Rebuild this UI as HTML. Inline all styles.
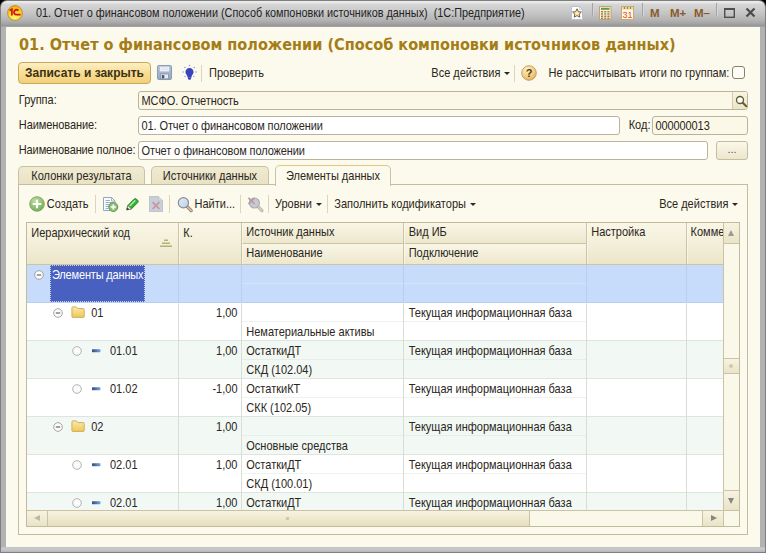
<!DOCTYPE html>
<html lang="ru">
<head>
<meta charset="utf-8">
<title>01. Отчет о финансовом положении</title>
<style>
*{box-sizing:border-box;margin:0;padding:0}
html,body{width:766px;height:553px;overflow:hidden;background:#000}
body{font-family:"Liberation Sans",sans-serif;font-size:11px;color:#2a2620;position:relative}
#win{position:absolute;left:0;top:0;width:766px;height:553px;background:#7e7e7e;border-radius:7px 7px 0 0;overflow:hidden}
#frame{position:absolute;left:1px;top:1px;width:764px;height:551px;border-radius:6px 6px 0 0;
 background:linear-gradient(to bottom,#eeeeee 0px,#e6e6e6 2px,#d6d6d6 3px,#cecece 8px,#c3c3c4 13px,#b4b4b5 19px,#a2a2a3 23px,#949495 25px,#b2b2b3 26px,#b2b2b3 100%)}
#titletext{position:absolute;left:36px;top:7px;font-size:11px;line-height:13px;white-space:nowrap;color:#222;transform-origin:0 80%;transform:scale(0.986,1.08)}
.tsep{position:absolute;top:3px;width:1px;height:13px;background:#a4a4a6;box-shadow:1px 0 0 #d6d6d8}
.mm{position:absolute;top:7px;font-weight:bold;font-size:11.5px;line-height:13px;color:#8a5a2a;white-space:nowrap}
#content{position:absolute;left:6px;top:27px;width:754px;height:520px;background:#fcfaec;overflow:hidden}
.t{position:absolute;white-space:nowrap;line-height:13px;height:13px;transform:scaleY(1.1);transform-origin:0 10.3px}
.s{display:inline-block;transform:scaleY(1.1);transform-origin:0 72%}
#h1{transform:none;font-family:"DejaVu Sans Condensed","DejaVu Sans","Liberation Sans",sans-serif;font-weight:bold;font-size:16.1px;line-height:20px;height:20px;color:#a57d16}
.ic{position:absolute;overflow:visible}
.sep{position:absolute;width:1px;background:#dbd5bc}
.dd{position:absolute;width:0;height:0;border-left:3px solid transparent;border-right:3px solid transparent;border-top:3px solid #2a2a2a}
#btnsave{position:absolute;width:133px;height:22px;border:1px solid #c9a95c;border-radius:4px;
 background:linear-gradient(to bottom,#fcefc4 0%,#f7dc8f 55%,#f2d07a 100%);text-align:center;white-space:nowrap}
#btnsave span{font-weight:bold;font-size:12px;line-height:20px;color:#3c3014}
.chk{position:absolute;width:13px;height:13px;border:1px solid #8a8268;border-radius:3px;background:#fdfcf6}
.inp{position:absolute;height:19px;border:1px solid #b9b39a;border-radius:3px;background:#fff;line-height:17px;padding-left:2.5px;white-space:nowrap;overflow:hidden}
.inp .s{position:relative;top:0.8px;letter-spacing:-0.1px}
.ro{background:#fbf8e8}
.lupa{position:absolute;right:0;top:0;width:15px;height:17px;border-left:1px solid #d2cbae;background:linear-gradient(to bottom,#f8f4de,#ebe5c8)}
.lupa svg{position:absolute;left:1.5px;top:2.5px}
.dots{position:absolute;width:32px;height:19px;border:1px solid #c4bd9e;border-radius:3px;background:linear-gradient(to bottom,#fbf8e8,#ece6cd);text-align:center;line-height:15px;color:#555}
.tab{position:absolute;top:139px;height:19px;border:1px solid #c9c2a4;border-bottom:none;border-radius:5px 5px 0 0;
 background:linear-gradient(to bottom,#f0ead2,#e8e1c4);line-height:19px;text-align:center;white-space:nowrap}
.tab.act{top:138px;height:21px;background:#fcfaec;line-height:20px;border-top-color:#dcc680}
#panel{position:absolute;left:12px;top:157px;width:730px;height:351px;border:1px solid #c3bda0;background:#fcfaec}
#tbl{position:absolute;border:1px solid #c2bb9b;background:#fff;overflow:hidden}
#tbl>*{position:absolute}
.hd{background:linear-gradient(to bottom,#f9f6e6 0%,#f3efda 50%,#ebe5c9 100%)}
.hd2{background:linear-gradient(to bottom,#f9f6e6 0%,#ede7cd 100%)}
.hl{height:1px;background:#cbc4a6}
.hv{width:1px;background:#cbc4a6;box-shadow:1px 0 0 rgba(255,255,255,.45)}
.row{left:0;width:696px;height:37px}
.rl{left:0;width:696px;height:1px}
.sl{height:1px}
.gv{width:1px;background:#d9ddd6}
.cur{background:#4860c0;outline:1px dotted #c8d0f0;outline-offset:-1px}
.vsb{background:#faf8e9;border-left:1px solid #c9c2a4}
.hsb{background:#faf8e9;border-top:1px solid #c9c2a4}
.sbtn{background:linear-gradient(to bottom,#f7f3df,#e9e3c7)}
.sbl{height:1px;background:#c9c2a4}
.thumb{background:linear-gradient(to bottom,#f7f3df,#e6dfbf);border-left:1px solid #c9c2a4;border-right:1px solid #c9c2a4}
.corner{background:#faf8e9;border-left:1px solid #c9c2a4}
.sbtn i,.thumb i{position:absolute;display:block}
.au{left:4px;top:7px;border-left:3.5px solid transparent;border-right:3.5px solid transparent;border-bottom:6px solid #9a9a94}
.ad{left:4px;top:7px;border-left:3.5px solid transparent;border-right:3.5px solid transparent;border-top:6px solid #86867e}
.al{left:7px;top:4px;border-top:3.5px solid transparent;border-bottom:3.5px solid transparent;border-right:6px solid #bcb8a8}
.ar{left:8px;top:4px;border-top:3.5px solid transparent;border-bottom:3.5px solid transparent;border-left:6px solid #86867e}
.dot{left:5px;top:5px;width:4px;height:4px;border-radius:2px;background:#cfc9b0}
.grip{left:238px;top:6px;width:3px;height:3px;background:#cfc9b0}

#fbot{position:absolute;left:1px;top:547px;width:764px;height:5px;background:linear-gradient(to bottom,#c2c2c6,#cacace 40%,#b6b6ba)}

</style>
</head>
<body>
<div id="win">
<div id="frame"></div><div id="fbot"></div>
<svg class="ic" style="left:7px;top:5px" width="16" height="16" viewBox="0 0 16 16"><defs><radialGradient id="lg" cx="50%" cy="80%" r="75%"><stop offset="0" stop-color="#fff878"/><stop offset="0.6" stop-color="#fbd81e"/><stop offset="1" stop-color="#f0b400"/></radialGradient></defs>
<circle cx="8" cy="8" r="7.4" fill="url(#lg)" stroke="#b88a3a" stroke-width="0.9"/>
<path d="M2.6 5.6 L4.9 4.3 V10.4" fill="none" stroke="#d41414" stroke-width="1.7"/>
<path d="M11.4 5.6 A2.5 2.5 0 1 0 9 9.7 H13.6" fill="none" stroke="#d41414" stroke-width="1.8"/></svg>
<div id="titletext">01. Отчет о финансовом положении (Способ компоновки источников данных)&nbsp; (1С:Предприятие)</div>
<svg class="ic" style="left:571px;top:6px" width="12" height="14" viewBox="0 0 12 14"><path d="M0.5 0.5 H8.5 L11.5 3.5 V13.5 H0.5 Z" fill="#fdfdff" stroke="#b4c0d6"/><path d="M8.5 0.5 V3.5 H11.5" fill="none" stroke="#b4c0d6" stroke-width="0.7"/>
<path d="M6 2.8 L7.3 5.7 L10.4 6 L8.1 8.1 L8.8 11.2 L6 9.6 L3.2 11.2 L3.9 8.1 L1.6 6 L4.7 5.7 Z" fill="#f8eabc" stroke="#7e6030" stroke-width="1" stroke-linejoin="round"/></svg>
<div class="tsep" style="left:592px"></div>
<svg class="ic" style="left:598.5px;top:5.7px" width="12.5" height="14" viewBox="0 0 12.5 14"><rect x="0.5" y="0.5" width="11.5" height="13" fill="#faf1d2" stroke="#c2a472"/>
<rect x="2" y="1.8" width="8.5" height="2" fill="#5c9a48"/>
<g fill="#8a6a3a"><rect x="2" y="5.2" width="2.1" height="1.2"/><rect x="5.2" y="5.2" width="2.1" height="1.2"/><rect x="8.4" y="5.2" width="2.1" height="1.2"/>
<rect x="2" y="7.4" width="2.1" height="1.2"/><rect x="5.2" y="7.4" width="2.1" height="1.2"/><rect x="8.4" y="7.4" width="2.1" height="1.2"/>
<rect x="2" y="9.6" width="2.1" height="1.2"/><rect x="5.2" y="9.6" width="2.1" height="1.2"/><rect x="8.4" y="9.6" width="2.1" height="1.2"/>
<rect x="2" y="11.6" width="2.1" height="1.2"/><rect x="5.2" y="11.6" width="2.1" height="1.2"/><rect x="8.4" y="11.6" width="2.1" height="1.2"/></g></svg>
<svg class="ic" style="left:621.2px;top:5.7px" width="13" height="14" viewBox="0 0 13 14"><rect x="0.5" y="0.5" width="12" height="13" fill="#fdf7e4" stroke="#c8aa72"/>
<rect x="1" y="1" width="11" height="2.6" fill="#f2dca6"/>
<circle cx="3.5" cy="2" r="0.8" fill="#7a5a2a"/><circle cx="6.5" cy="2" r="0.8" fill="#7a5a2a"/><circle cx="9.5" cy="2" r="0.8" fill="#7a5a2a"/>
<text x="6.5" y="12" text-anchor="middle" font-family="Liberation Sans,sans-serif" font-size="9" fill="#d8502c">31</text></svg>
<div class="tsep" style="left:642px"></div>
<div class="mm" style="left:650px">M</div>
<div class="mm" style="left:670px">M+</div>
<div class="mm" style="left:694px">M&ndash;</div>
<div class="tsep" style="left:716px"></div>
<svg class="ic" style="left:724px;top:8px" width="11" height="10" viewBox="0 0 11 10"><rect x="0.7" y="1.2" width="9.6" height="8.1" fill="none" stroke="#4e4e4e" stroke-width="1.4"/><rect x="0" y="0" width="11" height="2" fill="#4e4e4e"/></svg>
<svg class="ic" style="left:745px;top:7px" width="11" height="11" viewBox="0 0 11 11"><path d="M1.5 1.5 L9.5 9.5 M9.5 1.5 L1.5 9.5" stroke="#4a4a4a" stroke-width="2.2" fill="none"/></svg>
<div id="content">
<div class="t" id="h1" style="left:13px;top:8px">01. Отчет о финансовом положении (Способ компоновки источников данных)</div>
<div id="btnsave" style="left:12px;top:35px"><span>Записать и закрыть</span></div>
<svg class="ic" style="left:151px;top:38px;" width="15" height="15" viewBox="0 0 16 16"><defs><linearGradient id="sv" x1="0" y1="0" x2="0" y2="1"><stop offset="0" stop-color="#b6c6d8"/><stop offset="1" stop-color="#94a8c0"/></linearGradient></defs>
<rect x="0.5" y="0.5" width="15" height="15" rx="1.5" fill="url(#sv)" stroke="#8498b0"/>
<rect x="3" y="1.4" width="10" height="5.8" fill="#fbfcfd" stroke="#a8b8cc" stroke-width="0.6"/>
<path d="M4 3.2 H12 M4 5.2 H12" stroke="#c8d2de" stroke-width="0.9"/>
<rect x="4" y="9.6" width="8.2" height="5.2" fill="#e6ebf1" stroke="#7688a0" stroke-width="0.7"/>
<rect x="5.2" y="10.8" width="2.6" height="3.4" fill="#485468"/></svg>
<svg class="ic" style="left:175.5px;top:36.5px;" width="15" height="16.5" viewBox="0 0 16 17"><g fill="#8c94e4"><circle cx="8" cy="1.3" r="0.8"/><circle cx="3.1" cy="3.3" r="0.8"/><circle cx="12.9" cy="3.3" r="0.8"/><circle cx="1.1" cy="8.2" r="0.8"/><circle cx="14.9" cy="8.2" r="0.8"/><circle cx="3.3" cy="12.9" r="0.7"/><circle cx="12.7" cy="12.9" r="0.7"/></g>
<path d="M8 3.9 C5.4 3.9 3.7 5.9 3.7 8.2 C3.7 10 4.9 11 5.6 12.4 L6.6 16 Q8 17.2 9.4 16 L10.4 12.4 C11.1 11 12.3 10 12.3 8.2 C12.3 5.9 10.6 3.9 8 3.9Z" fill="#3a42bc"/>
<path d="M6.3 14.2 H9.7" stroke="#6870d0" stroke-width="0.7"/></svg>
<div class="sep" style="left:195px;top:38px;height:17px"></div>
<div class="t" style="left:203.0px;top:40.0px;">Проверить</div>
<div class="t" style="left:425.3px;top:40.0px;">Все действия</div>
<div class="dd" style="left:498px;top:45px"></div>
<div class="sep" style="left:508px;top:38px;height:17px"></div>
<svg class="ic" style="left:515.2px;top:37.900000000000006px;" width="16" height="16" viewBox="0 0 16 16"><defs><radialGradient id="hg" cx="38%" cy="28%" r="80%"><stop offset="0" stop-color="#fdeec4"/><stop offset="0.55" stop-color="#f6d084"/><stop offset="1" stop-color="#e6ac52"/></radialGradient></defs>
<circle cx="8" cy="8" r="7.3" fill="url(#hg)" stroke="#bc9a62" stroke-width="0.9"/>
<text x="8" y="12" text-anchor="middle" font-family="Liberation Sans,sans-serif" font-weight="bold" font-size="11" fill="#4c3a1c">?</text></svg>
<div class="t" style="left:542.6px;top:40.0px;letter-spacing:0.02px;">Не рассчитывать итоги по группам:</div>
<div class="chk" style="left:726px;top:39px"></div>
<div class="t" style="left:12.8px;top:67.2px;">Группа:</div>
<div class="inp ro" style="left:132px;top:64px;width:610px"><span class="s">МСФО. Отчетность</span><div class="lupa"><svg width="13" height="13" viewBox="0 0 13 13"><circle cx="5" cy="5" r="3.5" fill="#fdfdf4" stroke="#5a5a3a" stroke-width="1.3"/><path d="M7.7 7.7 L11.3 11.3" stroke="#6a5a2a" stroke-width="2" stroke-linecap="round"/></svg></div></div>
<div class="t" style="left:12.8px;top:92.2px;letter-spacing:-0.08px;">Наименование:</div>
<div class="inp" style="left:132px;top:89px;width:482px"><span class="s">01. Отчет о финансовом положении</span></div>
<div class="t" style="left:622.7px;top:92.2px;">Код:</div>
<div class="inp ro" style="left:646px;top:89px;width:96px"><span class="s">000000013</span></div>
<div class="t" style="left:12.8px;top:117.2px;letter-spacing:-0.12px;">Наименование полное:</div>
<div class="inp" style="left:132px;top:114px;width:570px"><span class="s">Отчет о финансовом положении</span></div>
<div class="dots" style="left:710px;top:114px">...</div>
<div class="tab" style="left:12px;width:127px"><span class="s">Колонки результата</span></div>
<div class="tab" style="left:145px;width:118px"><span class="s">Источники данных</span></div>
<div id="panel"></div>
<div class="tab act" style="left:269px;width:116px"><span class="s">Элементы данных</span></div>
<svg class="ic" style="left:23px;top:169px;" width="16" height="16" viewBox="0 0 16 16"><defs><radialGradient id="cg" cx="40%" cy="30%" r="80%"><stop offset="0" stop-color="#bde0a6"/><stop offset="1" stop-color="#6aa84a"/></radialGradient></defs>
<circle cx="8" cy="8" r="7.3" fill="url(#cg)" stroke="#7ea468" stroke-width="0.9"/>
<path d="M8 3.7 V12.3 M3.7 8 H12.3" stroke="#fff" stroke-width="2.1"/></svg>
<div class="t" style="left:40.8px;top:170.7px;">Создать</div>
<div class="sep" style="left:89px;top:168px;height:18px"></div>
<svg class="ic" style="left:96.8px;top:168.6px;" width="16" height="16" viewBox="0 0 16 16"><path d="M0.5 1.5 H8.5 L12 5 V14.5 H0.5 Z" fill="#fafcfe" stroke="#8fa6c4"/>
<path d="M8.5 1.5 V5 H12" fill="none" stroke="#8fa6c4" stroke-width="0.8"/>
<path d="M2.5 4.5 H7 M2.5 6.5 H9.5 M2.5 8.5 H7 M2.5 10.5 H6 M2.5 12.5 H5.5" stroke="#8ea4c4" stroke-width="0.9"/>
<circle cx="10.3" cy="11" r="4.5" fill="#8ec272" stroke="#5c8e4a" stroke-width="0.9"/>
<path d="M10.3 8.4 V13.6 M7.7 11 H12.9" stroke="#fff" stroke-width="1.7"/></svg>
<svg class="ic" style="left:120px;top:169.8px;" width="13.6" height="13.6" viewBox="0 0 14.6 14.6"><path d="M0.8 13.8 L2 9 L8.8 2.2 Q10 1 11.2 2.2 L12.6 3.6 Q13.8 4.8 12.6 6 L5.8 12.8 Z" fill="#34ae34" stroke="#1f7a1f" stroke-width="0.9"/>
<path d="M0.8 13.8 L2 9 L5.8 12.8 Z" fill="#fbf6e4" stroke="#5a5a4a" stroke-width="0.6"/>
<path d="M0.8 13.8 L1.5 11.2 L3.4 13.1 Z" fill="#2a2a2a"/>
<path d="M3.9 9.7 L10 3.6" stroke="#a2ea94" stroke-width="1.8"/></svg>
<svg class="ic" style="left:141.5px;top:169px;" width="16" height="16" viewBox="0 0 16 16"><path d="M1.5 0.5 H10.5 L14.5 4.5 V15.5 H1.5 Z" fill="#c9ced8" stroke="#bcc4d0"/>
<path d="M10.5 0.5 V4.5 H14.5" fill="#d6dae2" stroke="#bcc4d0" stroke-width="0.7"/>
<path d="M4.6 6.2 L11.4 13 M11.4 6.2 L4.6 13" stroke="#c8949c" stroke-width="1.7"/></svg>
<div class="sep" style="left:163px;top:168px;height:18px"></div>
<svg class="ic" style="left:171px;top:169px;" width="16" height="16" viewBox="0 0 16 16"><defs><linearGradient id="fl" x1="0" y1="0" x2="1" y2="1"><stop offset="0" stop-color="#e4eefa"/><stop offset="1" stop-color="#b8d0ea"/></linearGradient></defs>
<path d="M10 10.4 L14.2 14.6" stroke="#8a7868" stroke-width="3.2" stroke-linecap="round"/>
<path d="M10 10.4 L14.2 14.6" stroke="#d2bca4" stroke-width="1.8" stroke-linecap="round"/>
<circle cx="6.4" cy="6.8" r="5.1" fill="url(#fl)" stroke="#8c8c96" stroke-width="1.2"/></svg>
<div class="t" style="left:188.5px;top:170.7px;">Найти...</div>
<div class="sep" style="left:234px;top:168px;height:18px"></div>
<svg class="ic" style="left:241px;top:169px;" width="16" height="16" viewBox="0 0 16 16"><path d="M11 10.6 L15 14.6" stroke="#b4aca4" stroke-width="3" stroke-linecap="round"/>
<path d="M11 10.6 L15 14.6" stroke="#d8d0c4" stroke-width="1.6" stroke-linecap="round"/>
<circle cx="7.4" cy="7" r="5" fill="#c8cad0" stroke="#acaeb6" stroke-width="1.2"/>
<path d="M1.4 1.8 L7.6 8 M7.6 1.8 L1.4 8" stroke="#b49ca6" stroke-width="1.7"/></svg>
<div class="sep" style="left:262px;top:168px;height:18px"></div>
<div class="t" style="left:269.0px;top:170.7px;">Уровни</div>
<div class="dd" style="left:310px;top:176px"></div>
<div class="sep" style="left:321px;top:168px;height:18px"></div>
<div class="t" style="left:328.3px;top:170.7px;">Заполнить кодификаторы</div>
<div class="dd" style="left:464px;top:176px"></div>
<div class="t" style="left:653.2px;top:170.7px;">Все действия</div>
<div class="dd" style="left:726px;top:176px"></div>
<div id="tbl" style="left:20px;top:195px;width:714px;height:305px"><div class="hd" style="left:0;top:0;width:696px;height:41px"></div>
<div class="hd2" style="left:215px;top:0px;width:344px;height:20px"></div>
<div class="hd2" style="left:215px;top:21px;width:344px;height:20px"></div>
<div class="hl" style="left:215px;top:20px;width:344px"></div>
<div class="hl" style="left:0;top:41px;width:696px"></div>
<div class="hv" style="left:151px;top:0;height:41px"></div>
<div class="hv" style="left:214px;top:0;height:41px"></div>
<div class="hv" style="left:376px;top:0;height:41px"></div>
<div class="hv" style="left:559px;top:0;height:41px"></div>
<div class="hv" style="left:659px;top:0;height:41px"></div>
<div class="t" style="left:4.3px;top:3.7px">Иерархический код</div>
<svg class="ic" style="left:133px;top:15px" width="12" height="10" viewBox="0 0 12 10"><path d="M4 2.2 H8 M2 5.2 H10 M0 8.2 H12" stroke="#b8b074" stroke-width="1.5"/></svg>
<div class="t" style="left:156.3px;top:3.7px">К.</div>
<div class="t" style="left:219.3px;top:3.3px">Источник данных</div>
<div class="t" style="left:219.3px;top:24.3px">Наименование</div>
<div class="t" style="left:381.7px;top:3.3px">Вид ИБ</div>
<div class="t" style="left:381.7px;top:24.3px">Подключение</div>
<div class="t" style="left:564.2px;top:3.3px">Настройка</div>
<div class="t" style="left:663.6px;top:3.3px;width:32.4px;overflow:hidden">Комментарий</div>
<div class="row" style="top:42px;background:#c6dcfa"></div>
<div class="sl" style="left:215px;top:60px;width:344px;background:#d4e4fb"></div>
<div class="rl" style="top:79px;background:#b9cdf0"></div>
<svg class="ic" style="left:6.5px;top:46.5px" width="10" height="10" viewBox="0 0 10 10"><circle cx="5" cy="5" r="4.3" fill="#fdfdfd" stroke="#9a9a98" stroke-width="0.9"/><path d="M2.8 5 H7.2" stroke="#5a5a5a" stroke-width="1.1"/></svg>
<div class="cur" style="left:23px;top:42px;width:95px;height:37px"></div>
<div class="t" style="left:25px;top:45.7px;color:#fff;letter-spacing:-0.17px">Элементы данных</div>
<div class="row" style="top:80px;background:#ffffff"></div>
<div class="sl" style="left:215px;top:98px;width:344px;background:#f0f2ee"></div>
<div class="rl" style="top:117px;background:#dfe4dc"></div>
<svg class="ic" style="left:25.5px;top:84.5px" width="10" height="10" viewBox="0 0 10 10"><circle cx="5" cy="5" r="4.3" fill="#fdfdfd" stroke="#9a9a98" stroke-width="0.9"/><path d="M2.8 5 H7.2" stroke="#5a5a5a" stroke-width="1.1"/></svg>
<svg class="ic" style="left:43.5px;top:82.5px" width="14.5" height="12.7" viewBox="0 0 16 14"><defs><linearGradient id="fg" x1="0" y1="0" x2="0" y2="1"><stop offset="0" stop-color="#fbeaa6"/><stop offset="1" stop-color="#eec75c"/></linearGradient></defs>
<path d="M1 2.2 Q1 1 2.2 1 H6 L7.5 2.8 H13.6 Q14.6 2.8 14.6 3.8 V11.6 Q14.6 12.6 13.6 12.6 H2 Q1 12.6 1 11.6 Z" fill="url(#fg)" stroke="#c9a24a" stroke-width="0.9"/></svg>
<div class="t" style="left:64.2px;top:83.9px">01</div>
<div class="t" style="right:501.5px;top:83.9px">1,00</div>
<div class="t" style="left:219.3px;top:102.9px">Нематериальные активы</div>
<div class="t" style="left:381.7px;top:83.9px">Текущая информационная база</div>
<div class="row" style="top:118px;background:#f2f8f4"></div>
<div class="sl" style="left:215px;top:136px;width:344px;background:#e6eee8"></div>
<div class="rl" style="top:155px;background:#dfe4dc"></div>
<svg class="ic" style="left:45px;top:122.5px" width="10" height="10" viewBox="0 0 10 10"><circle cx="5" cy="5" r="4.3" fill="#fdfdfd" stroke="#a8a8a6" stroke-width="0.9"/></svg>
<svg class="ic" style="left:64.8px;top:126px" width="8.5" height="4" viewBox="0 0 10 4" preserveAspectRatio="none"><defs><linearGradient id="dg" x1="0" y1="0" x2="1" y2="0"><stop offset="0" stop-color="#2e4a7a"/><stop offset="1" stop-color="#7aa6dc"/></linearGradient></defs><rect x="0" y="0.3" width="10" height="3" rx="0.8" fill="url(#dg)"/></svg>
<div class="t" style="left:83.0px;top:121.9px">01.01</div>
<div class="t" style="right:501.5px;top:121.9px">1,00</div>
<div class="t" style="left:219.3px;top:121.9px">ОстаткиДТ</div>
<div class="t" style="left:219.3px;top:140.9px">СКД (102.04)</div>
<div class="t" style="left:381.7px;top:121.9px">Текущая информационная база</div>
<div class="row" style="top:156px;background:#ffffff"></div>
<div class="sl" style="left:215px;top:174px;width:344px;background:#f0f2ee"></div>
<div class="rl" style="top:193px;background:#dfe4dc"></div>
<svg class="ic" style="left:45px;top:160.5px" width="10" height="10" viewBox="0 0 10 10"><circle cx="5" cy="5" r="4.3" fill="#fdfdfd" stroke="#a8a8a6" stroke-width="0.9"/></svg>
<svg class="ic" style="left:64.8px;top:164px" width="8.5" height="4" viewBox="0 0 10 4" preserveAspectRatio="none"><defs><linearGradient id="dg" x1="0" y1="0" x2="1" y2="0"><stop offset="0" stop-color="#2e4a7a"/><stop offset="1" stop-color="#7aa6dc"/></linearGradient></defs><rect x="0" y="0.3" width="10" height="3" rx="0.8" fill="url(#dg)"/></svg>
<div class="t" style="left:83.0px;top:159.9px">01.02</div>
<div class="t" style="right:501.5px;top:159.9px">-1,00</div>
<div class="t" style="left:219.3px;top:159.9px">ОстаткиКТ</div>
<div class="t" style="left:219.3px;top:178.9px">СКК (102.05)</div>
<div class="t" style="left:381.7px;top:159.9px">Текущая информационная база</div>
<div class="row" style="top:194px;background:#f2f8f4"></div>
<div class="sl" style="left:215px;top:212px;width:344px;background:#e6eee8"></div>
<div class="rl" style="top:231px;background:#dfe4dc"></div>
<svg class="ic" style="left:25.5px;top:198.5px" width="10" height="10" viewBox="0 0 10 10"><circle cx="5" cy="5" r="4.3" fill="#fdfdfd" stroke="#9a9a98" stroke-width="0.9"/><path d="M2.8 5 H7.2" stroke="#5a5a5a" stroke-width="1.1"/></svg>
<svg class="ic" style="left:43.5px;top:196.5px" width="14.5" height="12.7" viewBox="0 0 16 14"><defs><linearGradient id="fg" x1="0" y1="0" x2="0" y2="1"><stop offset="0" stop-color="#fbeaa6"/><stop offset="1" stop-color="#eec75c"/></linearGradient></defs>
<path d="M1 2.2 Q1 1 2.2 1 H6 L7.5 2.8 H13.6 Q14.6 2.8 14.6 3.8 V11.6 Q14.6 12.6 13.6 12.6 H2 Q1 12.6 1 11.6 Z" fill="url(#fg)" stroke="#c9a24a" stroke-width="0.9"/></svg>
<div class="t" style="left:64.2px;top:197.9px">02</div>
<div class="t" style="right:501.5px;top:197.9px">1,00</div>
<div class="t" style="left:219.3px;top:216.9px">Основные средства</div>
<div class="t" style="left:381.7px;top:197.9px">Текущая информационная база</div>
<div class="row" style="top:232px;background:#ffffff"></div>
<div class="sl" style="left:215px;top:250px;width:344px;background:#f0f2ee"></div>
<div class="rl" style="top:269px;background:#dfe4dc"></div>
<svg class="ic" style="left:45px;top:236.5px" width="10" height="10" viewBox="0 0 10 10"><circle cx="5" cy="5" r="4.3" fill="#fdfdfd" stroke="#a8a8a6" stroke-width="0.9"/></svg>
<svg class="ic" style="left:64.8px;top:240px" width="8.5" height="4" viewBox="0 0 10 4" preserveAspectRatio="none"><defs><linearGradient id="dg" x1="0" y1="0" x2="1" y2="0"><stop offset="0" stop-color="#2e4a7a"/><stop offset="1" stop-color="#7aa6dc"/></linearGradient></defs><rect x="0" y="0.3" width="10" height="3" rx="0.8" fill="url(#dg)"/></svg>
<div class="t" style="left:83.0px;top:235.9px">02.01</div>
<div class="t" style="right:501.5px;top:235.9px">1,00</div>
<div class="t" style="left:219.3px;top:235.9px">ОстаткиДТ</div>
<div class="t" style="left:219.3px;top:254.9px">СКД (100.01)</div>
<div class="t" style="left:381.7px;top:235.9px">Текущая информационная база</div>
<div class="row" style="top:270px;background:#f2f8f4"></div>
<div class="sl" style="left:215px;top:288px;width:344px;background:#e6eee8"></div>
<div class="rl" style="top:307px;background:#dfe4dc"></div>
<svg class="ic" style="left:45px;top:274.5px" width="10" height="10" viewBox="0 0 10 10"><circle cx="5" cy="5" r="4.3" fill="#fdfdfd" stroke="#a8a8a6" stroke-width="0.9"/></svg>
<svg class="ic" style="left:64.8px;top:278px" width="8.5" height="4" viewBox="0 0 10 4" preserveAspectRatio="none"><defs><linearGradient id="dg" x1="0" y1="0" x2="1" y2="0"><stop offset="0" stop-color="#2e4a7a"/><stop offset="1" stop-color="#7aa6dc"/></linearGradient></defs><rect x="0" y="0.3" width="10" height="3" rx="0.8" fill="url(#dg)"/></svg>
<div class="t" style="left:83.0px;top:273.9px">02.01</div>
<div class="t" style="right:501.5px;top:273.9px">1,00</div>
<div class="t" style="left:219.3px;top:273.9px">ОстаткиДТ</div>
<div class="t" style="left:381.7px;top:273.9px">Текущая информационная база</div>
<div class="gv" style="left:151px;top:42px;height:245px"></div>
<div class="gv" style="left:214px;top:42px;height:245px"></div>
<div class="gv" style="left:376px;top:42px;height:245px"></div>
<div class="gv" style="left:559px;top:42px;height:245px"></div>
<div class="gv" style="left:659px;top:42px;height:245px"></div>
<div class="gv" style="left:151px;top:42px;height:37px;background:#b9cdf0"></div>
<div class="gv" style="left:214px;top:42px;height:37px;background:#b9cdf0"></div>
<div class="gv" style="left:376px;top:42px;height:37px;background:#b9cdf0"></div>
<div class="gv" style="left:559px;top:42px;height:37px;background:#b9cdf0"></div>
<div class="gv" style="left:659px;top:42px;height:37px;background:#b9cdf0"></div>
<div class="vsb" style="left:696px;top:0;width:16px;height:287px"></div>
<div class="sbtn" style="left:697px;top:0;width:15px;height:20px"><i class="au"></i></div>
<div class="sbl" style="left:697px;top:20px;width:15px"></div>
<div class="sbtn" style="left:697px;top:135px;width:15px;height:16px;border-top:1px solid #c9c2a4;border-bottom:1px solid #c9c2a4"><i class="dot"></i></div>
<div class="sbl" style="left:697px;top:267px;width:15px"></div>
<div class="sbtn" style="left:697px;top:268px;width:15px;height:19px"><i class="ad"></i></div>
<div class="hsb" style="left:0;top:287px;width:712px;height:16px"></div>
<div class="sbtn" style="left:0;top:288px;width:20px;height:15px"><i class="al"></i></div>
<div class="thumb" style="left:20px;top:288px;width:483px;height:15px"><i class="grip"></i></div>
<div class="sbtn" style="left:675px;top:288px;width:21px;height:15px;border-left:1px solid #c9c2a4"><i class="ar"></i></div>
<div class="corner" style="left:696px;top:288px;width:16px;height:15px"></div></div>
</div>
</div>
</body>
</html>
